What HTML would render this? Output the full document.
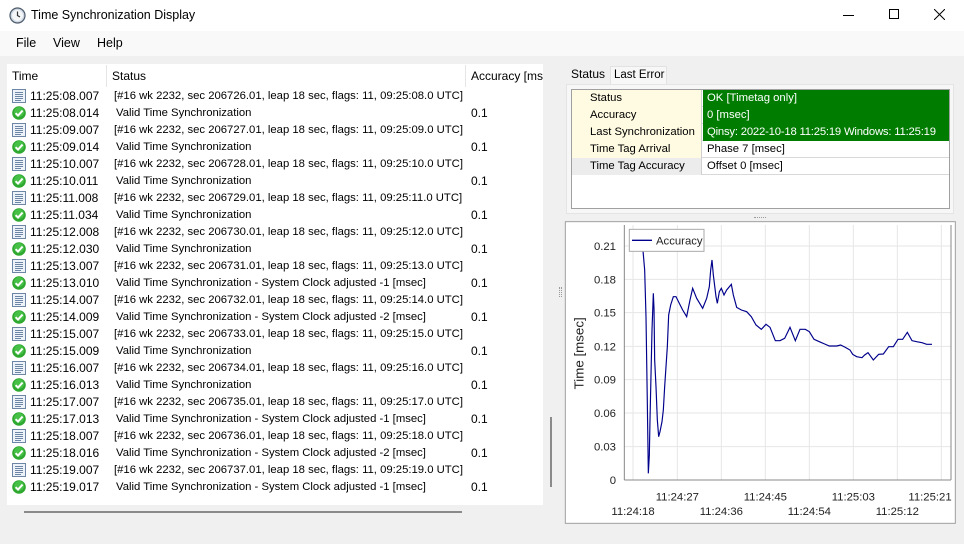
<!DOCTYPE html>
<html><head><meta charset="utf-8"><style>
*{margin:0;padding:0;box-sizing:border-box}
body{width:964px;height:544px;overflow:hidden;background:#f0f0f0;font-family:"Liberation Sans",sans-serif;font-size:12px;color:#000;position:relative}
.a{position:absolute;white-space:nowrap}
.row{position:absolute;left:0;height:17px;width:536px;line-height:17px}
.ic{position:absolute;left:5px;top:1px;width:14px;height:14px}
.t{position:absolute;left:23px;top:0}
.s{position:absolute;left:107px;top:0;font-size:11.3px;line-height:17px}
.v{position:absolute;left:464px;top:0}
.pg{position:absolute;left:0;width:377px;height:17px;line-height:17px;border-bottom:1px solid #d8d8d8;font-size:11.3px}
.pg .k{position:absolute;left:0;width:130px;height:17px;padding-left:18px;background:#fffbe2;border-right:1px solid #d0d0d0}
.pg .w{position:absolute;left:131px;right:0;height:17px;padding-left:4px;overflow:hidden}
.g{background:#007d00;color:#fff}
</style></head><body>
<div class="a" style="left:0;top:0;width:964px;height:31px;background:#fff"></div>
<svg class="a" style="left:9px;top:7px" width="17" height="17" viewBox="0 0 17 17"><circle cx="8.5" cy="8.5" r="7.5" fill="#cfd8e3" stroke="#4d5a6a" stroke-width="1.2"/><circle cx="8.5" cy="8.5" r="5.5" fill="#f4f6f8"/><path d="M8.5 4.5V8.5L11 10" stroke="#333" stroke-width="1.2" fill="none"/></svg>
<div class="a" style="left:31px;top:8px;font-size:12.5px">Time Synchronization Display</div>
<div class="a" style="left:843px;top:15px;width:11px;height:1px;background:#000"></div>
<div class="a" style="left:889px;top:9px;width:10px;height:10px;border:1px solid #000"></div>
<svg class="a" style="left:934px;top:9px" width="11" height="11"><path d="M0 0L11 11M11 0L0 11" stroke="#000" stroke-width="1"/></svg>
<div class="a" style="left:0;top:31px;width:964px;height:25px;background:#f9f9f9"></div>
<div class="a" style="left:16px;top:36px;font-size:12.5px">File</div>
<div class="a" style="left:53px;top:36px;font-size:12.5px">View</div>
<div class="a" style="left:97px;top:36px;font-size:12.5px">Help</div>
<div class="a" style="left:7px;top:64px;width:536px;height:441px;background:#fff;overflow:hidden">
<div class="a" style="left:99px;top:1px;width:1px;height:22px;background:#e5e5e5"></div>
<div class="a" style="left:458px;top:1px;width:1px;height:22px;background:#e5e5e5"></div>
<div class="a" style="left:5px;top:5px">Time</div>
<div class="a" style="left:105px;top:5px">Status</div>
<div class="a" style="left:464px;top:5px">Accuracy [msec]</div>
<div id="rows"></div>
</div>
<div class="a" style="left:24px;top:511px;width:438px;height:2px;background:#8a8a8a"></div>
<div class="a" style="left:550px;top:417px;width:2px;height:70px;background:#8a8a8a"></div>
<div class="a" style="left:559px;top:287px;width:3px;height:10px;border-left:1px dotted #999;border-right:1px dotted #999"></div>
<div class="a" style="left:565px;top:64px;width:44px;height:20px;background:#f0f0f0"></div>
<div class="a" style="left:571px;top:67px">Status</div>
<div class="a" style="left:610px;top:66px;width:57px;height:18px;background:#f7f7f7;border:1px solid #e2e2e2;border-bottom:none"></div>
<div class="a" style="left:614px;top:69px;font-size:11.5px">Last Error</div>
<div class="a" style="left:566px;top:84px;width:388px;height:130px;background:#f7f7f7;border:1px solid #e4e4e4"></div>
<div class="a" style="left:571px;top:89px;width:379px;height:120px;background:#fff;border:1px solid #a0a0a0">
<div class="pg" style="top:0"><div class="k">Status</div><div class="w g">OK [Timetag only]</div></div>
<div class="pg" style="top:17px"><div class="k">Accuracy</div><div class="w g">0 [msec]</div></div>
<div class="pg" style="top:34px"><div class="k">Last Synchronization</div><div class="w g"><span style="letter-spacing:-0.2px">Qinsy: 2022-10-18 11:25:19 Windows: 11:25:19</span></div></div>
<div class="pg" style="top:51px"><div class="k">Time Tag Arrival</div><div class="w">Phase 7 [msec]</div></div>
<div class="pg" style="top:68px"><div class="k" style="background:#ececec">Time Tag Accuracy</div><div class="w">Offset 0 [msec]</div></div>
</div>
<div class="a" style="left:754px;top:217px;width:12px;height:1px;border-top:1px dotted #999"></div>
<svg class="a" style="left:560px;top:220px" width="404" height="310" viewBox="0 0 1212 930" font-family="Liberation Sans, sans-serif">
<rect x="16" y="5" width="1170" height="905" fill="#fff" stroke="#a0a0a0" stroke-width="3"/>
<g stroke="#e6e6e6" stroke-width="3">
<line x1="193" y1="78" x2="1173" y2="78"/><line x1="193" y1="178" x2="1173" y2="178"/><line x1="193" y1="278" x2="1173" y2="278"/><line x1="193" y1="379" x2="1173" y2="379"/><line x1="193" y1="479" x2="1173" y2="479"/><line x1="193" y1="579" x2="1173" y2="579"/><line x1="193" y1="680" x2="1173" y2="680"/>
<line x1="219" y1="15" x2="219" y2="780"/><line x1="352" y1="15" x2="352" y2="780"/><line x1="484" y1="15" x2="484" y2="780"/><line x1="616" y1="15" x2="616" y2="780"/><line x1="748" y1="15" x2="748" y2="780"/><line x1="880" y1="15" x2="880" y2="780"/><line x1="1012" y1="15" x2="1012" y2="780"/><line x1="1144" y1="15" x2="1144" y2="780"/>
</g>
<g stroke="#888" stroke-width="3"><line x1="193" y1="15" x2="193" y2="780"/><line x1="193" y1="780" x2="1173" y2="780"/><line x1="1173" y1="15" x2="1173" y2="780"/></g>
<g fill="#222" font-size="34" text-anchor="end">
<text x="168" y="90">0.21</text><text x="168" y="190">0.18</text><text x="168" y="290">0.15</text><text x="168" y="391">0.12</text><text x="168" y="491">0.09</text><text x="168" y="591">0.06</text><text x="168" y="692">0.03</text><text x="168" y="792">0</text>
</g>
<g fill="#222" font-size="34" text-anchor="middle">
<text x="352" y="842">11:24:27</text><text x="616" y="842">11:24:45</text><text x="880" y="842">11:25:03</text><text x="1110" y="842">11:25:21</text>
<text x="219" y="885">11:24:18</text><text x="484" y="885">11:24:36</text><text x="748" y="885">11:24:54</text><text x="1012" y="885">11:25:12</text>
</g>
<text x="70" y="400" font-size="40" fill="#222" text-anchor="middle" transform="rotate(-90 70 400)">Time [msec]</text>
<polyline fill="none" stroke="#00008b" stroke-width="3.5" points="249,92 254,150 258,290 260,420 262,550 264,690 265,760 268,705 270,600 274,420 276,330 280,220 282,265 284,420 288,500 292,600 296,650 300,635 306,605 310,570 314,500 318,440 322,380 326,285 332,255 340,230 348,230 358,250 368,270 380,290 390,240 398,205 410,235 428,265 440,235 448,200 452,150 456,120 460,165 468,230 472,250 478,215 484,205 492,225 500,210 514,193 520,225 530,262 544,270 560,275 574,290 588,315 604,328 618,313 630,322 646,362 660,362 674,355 690,322 706,362 720,328 736,328 748,335 762,358 778,365 794,372 808,378 830,378 842,375 856,382 870,390 878,403 890,410 906,413 914,405 924,398 940,420 956,403 970,402 986,380 1000,380 1014,358 1028,358 1042,337 1056,362 1070,365 1086,368 1100,373 1116,373"/>
<rect x="208" y="28" width="224" height="66" fill="#fff" stroke="#aaa" stroke-width="3"/>
<line x1="216" y1="61" x2="276" y2="61" stroke="#00008b" stroke-width="4"/>
<text x="288" y="74" font-size="34" fill="#222">Accuracy</text>
</svg>
<script>
var data=[
["08.007",0,"206726.01","08.0"],["08.014",1,"Valid Time Synchronization"],
["09.007",0,"206727.01","09.0"],["09.014",1,"Valid Time Synchronization"],
["10.007",0,"206728.01","10.0"],["10.011",1,"Valid Time Synchronization"],
["11.008",0,"206729.01","11.0"],["11.034",1,"Valid Time Synchronization"],
["12.008",0,"206730.01","12.0"],["12.030",1,"Valid Time Synchronization"],
["13.007",0,"206731.01","13.0"],["13.010",1,"Valid Time Synchronization - System Clock adjusted -1 [msec]"],
["14.007",0,"206732.01","14.0"],["14.009",1,"Valid Time Synchronization - System Clock adjusted -2 [msec]"],
["15.007",0,"206733.01","15.0"],["15.009",1,"Valid Time Synchronization"],
["16.007",0,"206734.01","16.0"],["16.013",1,"Valid Time Synchronization"],
["17.007",0,"206735.01","17.0"],["17.013",1,"Valid Time Synchronization - System Clock adjusted -1 [msec]"],
["18.007",0,"206736.01","18.0"],["18.016",1,"Valid Time Synchronization - System Clock adjusted -2 [msec]"],
["19.007",0,"206737.01","19.0"],["19.017",1,"Valid Time Synchronization - System Clock adjusted -1 [msec]"]];
var doc='<svg class="ic" viewBox="0 0 14 14"><rect x="0.5" y="0.5" width="13" height="13" fill="#eef3f9" stroke="#6d86a6"/><path d="M3 3.5h8M3 5.5h8M3 7.5h8M3 9.5h8M3 11.5h6" stroke="#6d86a6"/></svg>';
var ok='<svg class="ic" viewBox="0 0 14 14"><circle cx="7" cy="7" r="6.8" fill="#2fa82f"/><circle cx="7" cy="6" r="5" fill="#46c046"/><path d="M3.6 7.2L6 9.6L10.6 4.6" stroke="#fff" stroke-width="2" fill="none"/></svg>';
var h='';
data.forEach(function(r,i){
 var s=r[1]?'<span class="s" style="left:109px">'+r[2]+'</span><span class="v">0.1</span>':'<span class="s">[#16 wk 2232, sec '+r[2]+', leap 18 sec, flags: 11, 09:25:'+r[3]+' UTC]</span>';
 h+='<div class="row" style="top:'+(24+i*17)+'px">'+(r[1]?ok:doc)+'<span class="t">11:25:'+r[0]+'</span>'+s+'</div>';
});
document.getElementById('rows').innerHTML=h;
</script>
</body></html>
